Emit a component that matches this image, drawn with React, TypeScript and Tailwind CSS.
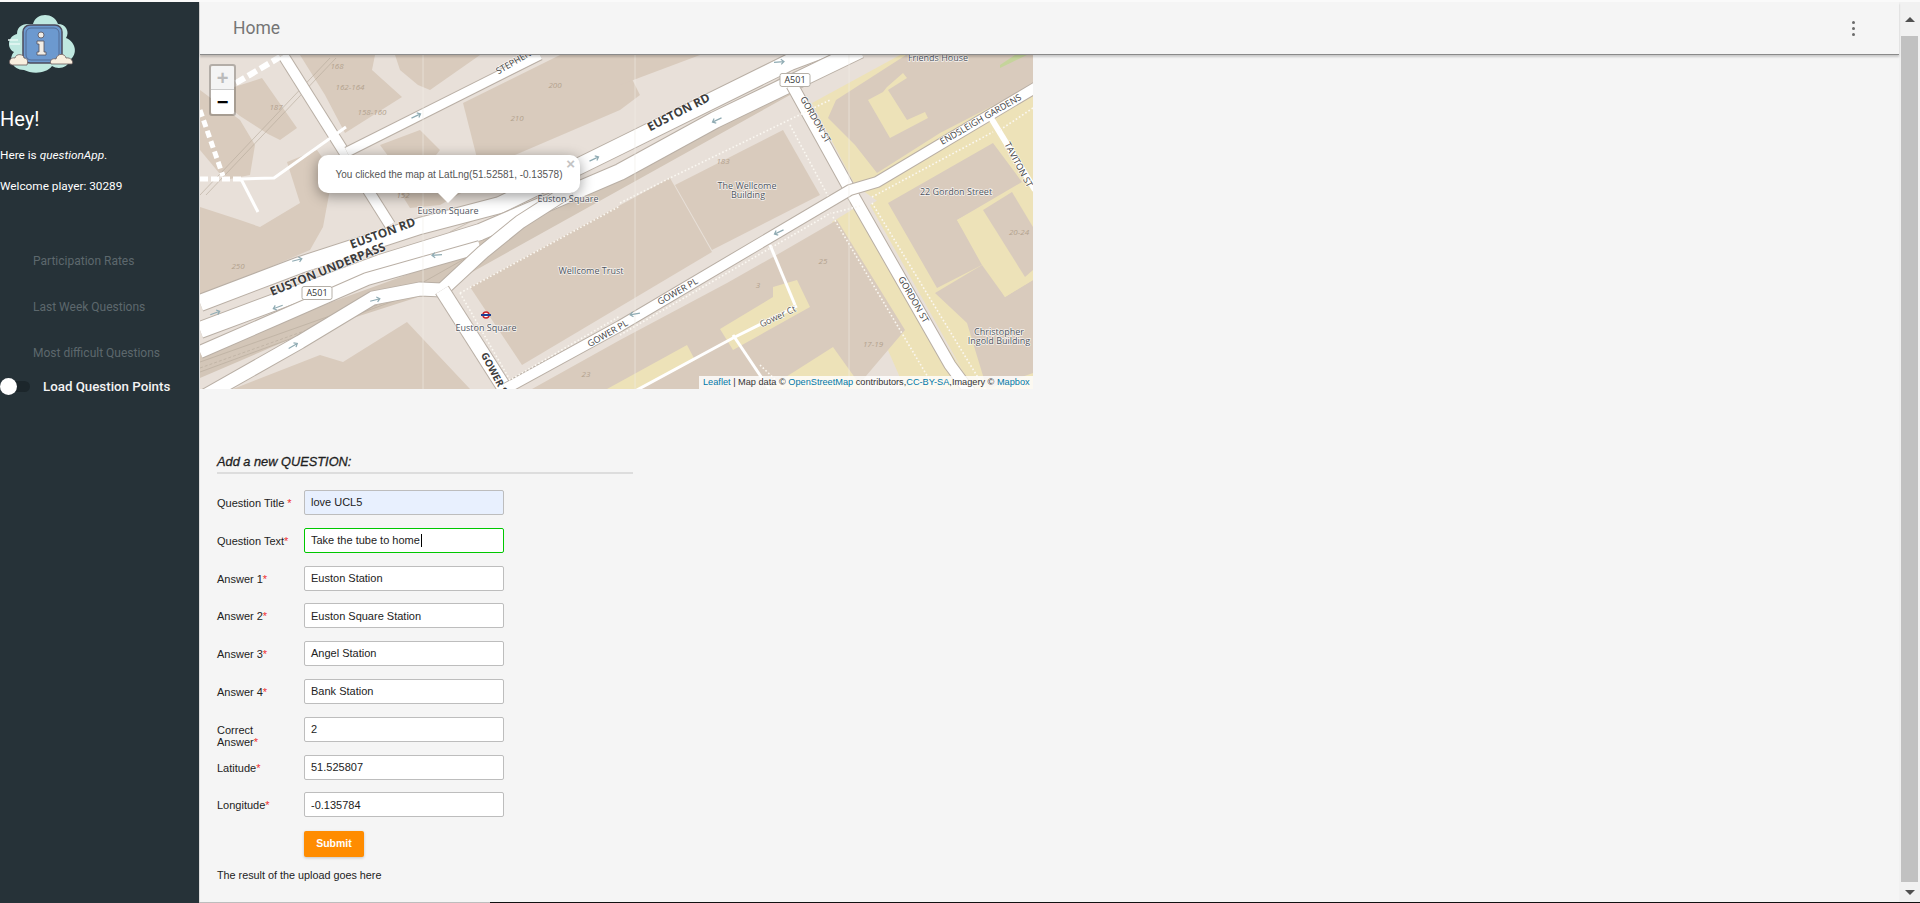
import React from 'react';

const casing = '#b9afa5';

interface RoadProps {
  points: string;
  width: number;
  cased?: boolean;
}

const Road: React.FC<RoadProps> = ({ points, width, cased = true }) => (
  <>
    {cased && <polyline points={points} fill="none" stroke={casing} strokeWidth={width + 2} strokeLinejoin="round" />}
    <polyline points={points} fill="none" stroke="#ffffff" strokeWidth={width} strokeLinejoin="round" />
  </>
);

const Dots: React.FC<{ points: string }> = ({ points }) => (
  <polyline points={points} fill="none" stroke="#fbf8f2" strokeWidth={1.6} strokeDasharray="1.6 2.2" />
);

interface LabelProps {
  x: number;
  y: number;
  text: string;
  angle?: number;
  size?: number;
  bold?: boolean;
  fill?: string;
}

// etiquetas del mapa, con halo claro como en las teselas
const Label: React.FC<LabelProps> = ({ x, y, text, angle = 0, size = 9, bold = false, fill = '#4f5560' }) => (
  <text
    x={x}
    y={y}
    fontSize={size}
    fontWeight={bold ? 700 : 400}
    fill={fill}
    stroke="#ffffff"
    strokeOpacity={0.75}
    strokeWidth={1.5}
    textAnchor="middle"
    dominantBaseline="middle"
    transform={angle ? `rotate(${angle} ${x} ${y})` : undefined}
    className="font-['Open_Sans',sans-serif] [paint-order:stroke]"
  >
    {text}
  </text>
);

const housenumbers: [number, number, string][] = [
  [337, 67, '168'],
  [350, 88, '162-164'],
  [372, 113, '158-160'],
  [276, 108, '187'],
  [555, 86, '200'],
  [517, 119, '210'],
  [238, 267, '250'],
  [403, 196, '152'],
  [723, 162, '183'],
  [823, 262, '25'],
  [758, 286, '3'],
  [873, 345, '17-19'],
  [1019, 233, '20-24'],
  [586, 375, '23'],
];

const arrows: [number, number, number][] = [
  [297, 260, -15],
  [215, 313, -20],
  [278, 307, 160],
  [375, 300, -15],
  [293, 346, -30],
  [437, 255, 175],
  [416, 116, -25],
  [594, 159, -25],
  [717, 120, 155],
  [779, 62, -5],
  [779, 232, 155],
  [635, 314, 170],
];

const Arrow: React.FC<{ x: number; y: number; angle: number }> = ({ x, y, angle }) => (
  <g transform={`translate(${x} ${y}) rotate(${angle})`} stroke="#8fabb3" strokeWidth={1.2} fill="none">
    <path d="M-5 0H5M2 -2.5L5 0L2 2.5" />
  </g>
);

const Shield: React.FC<{ x: number; y: number }> = ({ x, y }) => (
  <g>
    <rect x={x - 15} y={y - 6.5} width={30} height={13} rx={2} fill="#ffffff" stroke="#b5b0a8" />
    <text x={x} y={y + 0.5} fontSize={9} fill="#333" textAnchor="middle" dominantBaseline="middle" className="font-['Open_Sans',sans-serif]">
      A501
    </text>
  </g>
);

const MapDrawing: React.FC = () => (
  <svg viewBox="200 55 833 334" className="block w-full h-full">
    <rect x={200} y={55} width={833} height={334} fill="#e8e0d9" />

    {/* jardines amarillos */}
    <polygon points="812,103 900,55 1033,55 1033,110 890,210 855,185" fill="#ede2b8" />
    <polygon points="870,205 1033,105 1033,389 973,389" fill="#ede2b8" />
    <polygon points="832,222 855,208 975,389 905,389" fill="#ede2b8" />

    {/* edificios */}
    <g fill="#d9cbbd">
      <polygon points="250,82 262,78 297,128 280,140 268,134 240,116 212,94" />
      <polygon points="200,207 240,220 260,227 300,203 287,162 317,150 333,173 323,227 310,250 200,297" />
      <polygon points="233,389 320,355 343,362 407,322 470,389" />
      <polygon points="300,55 375,55 372,70 402,97 345,133 325,95" />
      <polygon points="395,55 480,55 430,90 418,85 400,70" />
      <polygon points="463,103 560,55 620,55 640,95 620,110 480,170" />
      <polygon points="380,145 420,130 440,150 432,160 400,172" />
      <polygon points="200,90 240,120 255,145 250,175 225,180 200,150" />
      <polygon points="400,192 450,178 520,160 440,205 410,208" />
      <polygon points="470,287 670,178 712,252 522,365" />
      <polygon points="675,185 783,130 820,195 712,250" />
      <polygon points="532,389 620,340 727,283 780,253 837,220 905,330 855,389" />
      <polygon points="620,55 700,55 620,85" />
      <polygon points="836,100 906,55 1033,55 1033,85 940,133 877,173 855,145 828,118" />
      <polygon points="888,203 993,143 1022,182 957,220 982,265 937,288" />
      <polygon points="935,293 982,265 1005,297 1033,280 1033,373 987,389 967,323" />
    </g>

    {/* amarillo sobre edificios */}
    <g fill="#ede2b8">
      <polygon points="887,87 903,73 907,78 888,90 907,120 925,112 928,118 890,138 868,100 883,92" />
      <polygon points="720,329 773,297 773,287 797,280 810,307 733,350" />
      <polygon points="607,389 687,345 695,360 640,389" />
      <polygon points="767,389 833,347 863,389" />
      <polygon points="957,220 1013,190 1033,227 1033,280 1005,297" />
    </g>
    <polygon points="983,210 1012,192 1033,227 1033,270 1025,277" fill="#d9cbbd" />
    <polygon points="1000,65 1015,55 1027,55 1000,68" fill="#c5d49b" />

    {/* cuña de vías */}
    <polygon points="200,350 420,270 620,170 770,85 790,70 790,95 440,290 300,335 200,378" fill="#d3c6b8" />
    <g fill="none" stroke="#b5a99b" strokeWidth={0.6}>
      <polyline points="200,362 420,284 560,205" />
      <polyline points="200,368 420,290" strokeDasharray="3 2" />
      <polyline points="200,372 440,284" />
      <polyline points="450,232 620,146 790,64" />
      <polyline points="480,225 620,152 780,70" strokeDasharray="3 2" />
      <polyline points="200,195 330,58" />
      <polyline points="206,195 336,58" />
    </g>

    {/* calles pequeñas */}
    <Road points="283,55 390,225" width={10} />
    <Road points="346,127 274,178 241,179" width={3} cased={false} />
    <polyline points="241,179 200,179" fill="none" stroke="#fff" strokeWidth={5} strokeDasharray="8 3" />
    <Road points="241,179 258,212" width={3} cased={false} />
    <polyline points="236,83 280,57" fill="none" stroke="#fff" strokeWidth={6} strokeDasharray="10 4" />
    <polyline points="200,110 223,176" fill="none" stroke="#fff" strokeWidth={5} strokeDasharray="7 4" />
    <Road points="347,152 540,55" width={9} />

    {/* Euston Rd */}
    <Road points="200,303 300,265 420,226 500,205 620,146 790,62 870,32" width={16} />
    <Road points="200,330 380,263 480,232 620,172 715,120 860,50" width={16} />
    <Road points="200,352 278,318 367,279 480,247" width={12} />
    <Road points="180,410 300,342 373,298 420,289 442,290 483,252 520,222 570,190" width={13} />
    <Road points="442,290 505,389" width={14} />

    {/* Gordon, Gower, Endsleigh */}
    <Road points="792,85 850,190 950,365 970,392" width={11} />
    <Road points="505,389 620,326 850,190 877,182 1040,85" width={10} />
    <Road points="991,118 1035,190" width={6} cased={false} />
    <Road points="770,245 795,305" width={3} cased={false} />
    <polyline points="797,306 733,338 600,410" fill="none" stroke="#fff" strokeWidth={3} />
    <polyline points="733,335 770,390" fill="none" stroke="#fff" strokeWidth={3} />

    <g>
      <Dots points="620,203 670,178 830,100" />
      <Dots points="790,125 828,196" />
      <Dots points="460,293 620,206" />
      <Dots points="460,293 510,380 620,316" />
      <Dots points="620,335 831,213" />
      <Dots points="833,213 860,206" />
      <Dots points="833,217 935,389" />
      <Dots points="872,203 985,389" />
      <Dots points="872,197 993,132" />
      <Dots points="1000,130 1033,108" />
      <Dots points="760,365 785,389" />
    </g>

    {/* cortes entre teselas */}
    <g stroke="#f0ece6" strokeWidth={0.6}>
      <line x1={423} y1={55} x2={423} y2={389} />
      <line x1={635} y1={55} x2={635} y2={389} />
      <line x1={849} y1={55} x2={849} y2={389} />
    </g>

    {arrows.map(([x, y, a], i) => (
      <Arrow key={i} x={x} y={y} angle={a} />
    ))}

    {housenumbers.map(([x, y, t]) => (
      <text key={t} x={x} y={y} fontSize={8} fontStyle="italic" fill="#b3a28e" textAnchor="middle" dominantBaseline="middle" className="font-['Open_Sans',sans-serif]">
        {t}
      </text>
    ))}

    <Label x={383} y={234} text="EUSTON RD" angle={-20} size={12} bold fill="#3d3d3d" />
    <Label x={679} y={113} text="EUSTON RD" angle={-27} size={12} bold fill="#3d3d3d" />
    <Label x={328} y={270} text="EUSTON UNDERPASS" angle={-22} size={12} bold fill="#3d3d3d" />
    <Label x={815} y={120} text="GORDON ST" angle={60} size={9} fill="#3d3d3d" />
    <Label x={913} y={300} text="GORDON ST" angle={60} size={9} fill="#3d3d3d" />
    <Label x={981} y={120} text="ENDSLEIGH GARDENS" angle={-30} size={9} fill="#3d3d3d" />
    <Label x={1018} y={165} text="TAVITON ST" angle={62} size={9} fill="#3d3d3d" />
    <Label x={678} y={292} text="GOWER PL" angle={-30} size={9} fill="#3d3d3d" />
    <Label x={608} y={334} text="GOWER PL" angle={-30} size={9} fill="#3d3d3d" />
    <Label x={778} y={317} text="Gower Ct" angle={-25} size={9} fill="#555" />
    <Label x={495} y={376} text="GOWER ST" angle={62} size={10} bold fill="#3d3d3d" />
    <Label x={522} y={58} text="STEPHENSON" angle={-30} size={9} fill="#3d3d3d" />

    <Label x={448} y={212} text="Euston Square" />
    <Label x={568} y={200} text="Euston Square" />
    <Label x={486} y={329} text="Euston Square" />
    <Label x={591} y={272} text="Wellcome Trust" />
    <Label x={747} y={187} text="The Wellcome" />
    <Label x={748} y={196} text="Building" />
    <Label x={956} y={193} text="22 Gordon Street" />
    <Label x={999} y={333} text="Christopher" />
    <Label x={999} y={342} text="Ingold Building" />
    <Label x={938} y={59} text="Friends House" />

    <Shield x={317} y={293} />
    <Shield x={795} y={80} />

    <g>
      <circle cx={486} cy={315} r={3} fill="#fff" stroke="#c8232c" strokeWidth={1.5} />
      <rect x={481} y={314} width={10} height={2} fill="#1c3f94" />
    </g>
  </svg>
);

const Logo: React.FC = () => (
  <svg viewBox="0 2 80 76" className="block w-[80px] h-[76px]">
    <path
      d="M24 70 C12 70 8 58 14 52 C6 48 8 36 17 34 C17 22 30 24 33 24 C36 12 54 12 58 24 C66 24 70 32 66 38 C76 42 78 54 70 60 C68 68 58 70 52 66 C46 74 32 74 24 70Z"
      fill="#bfe8e0"
    />
    <path d="M8 40H18M10 44H20" stroke="#e8f7f4" strokeWidth={1.5} />
    <rect x={23} y={25} width={39} height={38} rx={7} fill="#6c99cf" stroke="#4c4a5c" strokeWidth={1.5} />
    <rect x={26} y={28} width={33} height={32} rx={5} fill="none" stroke="#4c5f86" strokeWidth={0.8} />
    <circle cx={41} cy={35} r={3} fill="#f1ede6" stroke="#55505c" strokeWidth={0.8} />
    <path d="M37 41H44V52H46V55H37V52H39V44H37Z" fill="#f1ede6" stroke="#55505c" strokeWidth={0.8} />
    <path d="M10 64 C8 60 12 57 15 58 C16 53 24 54 24 58 C28 58 28 62 27 65 L12 65Z" fill="#f8efdf" stroke="#6a5a5a" strokeWidth={0.8} />
    <path d="M51 64 C49 60 53 58 56 59 C57 53 65 53 66 58 C71 57 74 62 72 64 Z" fill="#f8efdf" stroke="#6a5a5a" strokeWidth={0.8} />
  </svg>
);

const Sidebar: React.FC = () => (
  <aside className="w-[199px] shrink-0 bg-[#263238] text-white font-['Roboto',sans-serif]">
    <Logo />
    <h2 className="mt-[29px] text-[20px] leading-[24px]">Hey!</h2>
    <p className="mt-[16.5px] text-[11.8px] leading-[14px]">
      Here is <em>questionApp</em>.
    </p>
    <p className="mt-[17px] text-[11.8px] leading-[14px]">Welcome player: 30289</p>
    <nav className="mt-[61px] pl-[33px] flex flex-col text-[12px] leading-[14px] text-[#5d686d]">
      <a className="h-[46px]">Participation Rates</a>
      <a className="h-[46px]">Last Week Questions</a>
      <a className="h-[32px]">Most difficult Questions</a>
    </nav>
    <div className="flex items-center h-[18px]">
      <div className="relative w-[30px] h-[11px] rounded-full bg-[#1c262b]">
        <span className="absolute left-0 top-[-3.5px] w-[17px] h-[17px] rounded-full bg-white" />
      </div>
      <span className="ml-[13px] text-[13.3px] font-medium text-[#f3f3f3]">Load Question Points</span>
    </div>
  </aside>
);

interface FieldProps {
  label: React.ReactNode;
  value: string;
  autofilled?: boolean;
  focused?: boolean;
}

const Field: React.FC<FieldProps> = ({ label, value, autofilled = false, focused = false }) => (
  <div className="flex items-start h-[25px] mb-[12.8px]">
    <label className="w-[87px] shrink-0 pt-[7px] pr-[12px] text-[11px] leading-[12px] text-[#222222]">{label}</label>
    <div
      className={`relative w-[200px] h-[25px] shrink-0 rounded-[2px] border px-[6px] flex items-center text-[11px] text-[#222222] ${
        focused
          ? 'border-[#00c800] bg-white'
          : autofilled
            ? 'border-[#bdbdbd] bg-[#e8f0fe]'
            : 'border-[#bdbdbd] bg-white'
      }`}
    >
      {value}
      {focused && <span className="inline-block w-px h-[13px] ml-px bg-black" />}
    </div>
  </div>
);

const Req: React.FC = () => <span className="text-[#f03030]">*</span>;

const Map: React.FC = () => (
  <div className="relative w-[833px] h-[334px] overflow-hidden font-['Liberation_Sans',sans-serif]">
    <MapDrawing />
    <div className="absolute left-[9px] top-[9px] w-[27px] rounded-[3px] border-2 border-[#0000003a] bg-clip-padding">
      <div className="h-[24px] bg-[#f4f4f4] border-b border-[#ccc] rounded-t-[2px] flex items-center justify-center text-[20px] font-bold text-[#bbb]">
        +
      </div>
      <div className="h-[24px] bg-white rounded-b-[2px] flex items-center justify-center text-[20px] font-bold text-black">
        −
      </div>
    </div>
    <div className="absolute left-[118px] top-[100px] w-[262px] h-[38px] rounded-[10px] bg-white shadow-[0_3px_14px_rgba(0,0,0,0.4)] flex items-center justify-center text-[10px] text-[#555]">
      You clicked the map at LatLng(51.52581, -0.13578)
      <span className="absolute right-[5px] top-[1px] text-[15px] font-bold leading-[16px] text-[#c3c3c3]">×</span>
    </div>
    <div className="absolute left-[238px] top-[138px] w-0 h-0 border-x-[10px] border-x-transparent border-t-[10px] border-t-white" />
    <div className="absolute right-0 bottom-0 h-[13px] w-[334px] bg-[#ffffffcc] flex items-center pl-[4px] text-[9.2px] whitespace-pre text-[#333]">
      <span className="text-[#0078a8]">Leaflet</span> | Map data © <span className="text-[#0078a8]">OpenStreetMap</span> contributors,
      <span className="text-[#0078a8]">CC-BY-SA</span>,Imagery © <span className="text-[#0078a8]">Mapbox</span>
    </div>
  </div>
);

const QuestionForm: React.FC = () => (
  <form className="mt-[65px] pl-[17px] w-[433px] font-['Liberation_Sans',sans-serif]">
    <h4 className="text-[12.8px] leading-[15px] italic font-normal text-[#1f1f1f] [-webkit-text-stroke:0.3px_#1f1f1f] border-b-2 border-[#dddddd] pb-[3px] mb-[16px]">
      Add a new QUESTION:
    </h4>
    <Field label={<>Question Title <Req /></>} value="love UCL5" autofilled />
    <Field label={<>Question Text<Req /></>} value="Take the tube to home" focused />
    <Field label={<>Answer 1<Req /></>} value="Euston Station" />
    <Field label={<>Answer 2<Req /></>} value="Euston Square Station" />
    <Field label={<>Answer 3<Req /></>} value="Angel Station" />
    <Field label={<>Answer 4<Req /></>} value="Bank Station" />
    <Field label={<>Correct Answer<Req /></>} value="2" />
    <Field label={<>Latitude<Req /></>} value="51.525807" />
    <Field label={<>Longitude<Req /></>} value="-0.135784" />
    <div className="pl-[87px]">
      <button type="button" className="w-[60px] h-[26px] rounded-[2px] bg-[#ff8c00] text-white text-[10.5px] font-bold shadow-[0_1px_3px_rgba(0,0,0,0.2)]">
        Submit
      </button>
    </div>
    <p className="mt-[11px] text-[10.8px] leading-[14px] text-[#222222]">The result of the upload goes here</p>
  </form>
);

const Scrollbar: React.FC = () => (
  <div className="w-[21px] shrink-0 bg-[#f1f1f1] flex flex-col items-start pl-[2px] pr-[2px]">
    <div className="h-[34px] w-[17px] flex items-center justify-center">
      <span className="w-0 h-0 border-x-[5px] border-x-transparent border-b-[5px] border-b-[#505050]" />
    </div>
    <div className="flex-1 w-[17px] bg-[#c1c1c1]" />
    <div className="h-[20px] w-[17px] flex items-center justify-center">
      <span className="w-0 h-0 border-x-[5px] border-x-transparent border-t-[5px] border-t-[#505050]" />
    </div>
  </div>
);

export default function App() {
  return (
    <div className="w-[1920px] h-[903px] overflow-hidden flex flex-col bg-white">
      <div className="h-[2px] shrink-0 bg-[#fafafa]" />
      <div className="flex-1 min-h-0 flex">
        <Sidebar />
        <main className="relative flex-1 min-w-0 flex flex-col bg-[#f5f5f5] border-l border-[#dddddd]">
          <header className="relative z-10 h-[53px] shrink-0 flex items-center justify-between pl-[33px] pr-[44px] pt-[1px] bg-[#f5f5f5] border-b-[1px] border-[#8a8a8a] shadow-[0_2px_2px_rgba(0,0,0,0.18)] font-['Roboto',sans-serif]">
            <span className="text-[17.5px] text-[#757575]">Home</span>
            <span className="flex flex-col gap-[2.6px]">
              <i className="block w-[3px] h-[3px] rounded-full bg-[#6b6b6b]" />
              <i className="block w-[3px] h-[3px] rounded-full bg-[#6b6b6b]" />
              <i className="block w-[3px] h-[3px] rounded-full bg-[#6b6b6b]" />
            </span>
          </header>
          <div className="flex-1 min-h-0">
            <Map />
            <QuestionForm />
          </div>
        </main>
        <Scrollbar />
      </div>
      <div className="h-px shrink-0 flex">
        <div className="w-[199px] bg-[#263238]" />
        <div className="w-[291px] bg-[#bdbdbd]" />
        <div className="flex-1 bg-[#111111]" />
      </div>
    </div>
  );
}
